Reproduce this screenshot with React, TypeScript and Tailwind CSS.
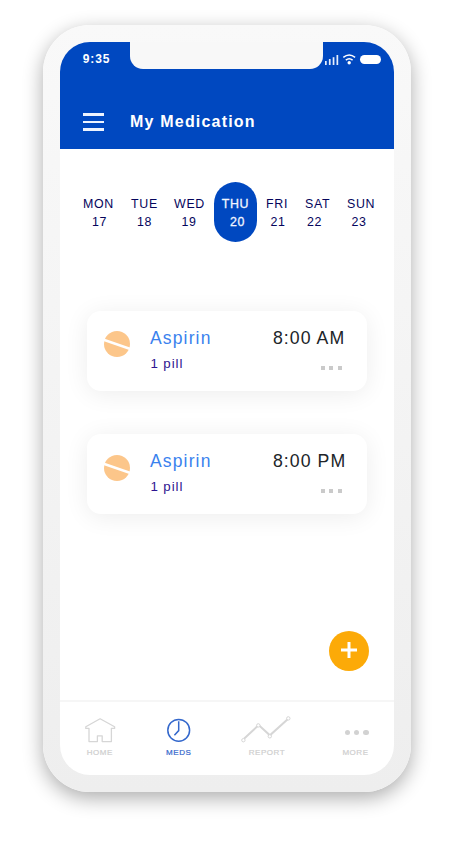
import React from "react";

const days = [
  { name: "MON", date: "17", cell: "w-[48px]", num: "pl-[9px]" },
  { name: "TUE", date: "18", cell: "w-[43px]", num: "pl-[6px]" },
  { name: "WED", date: "19", cell: "w-[40px]", num: "pl-[7.5px]" },
  { name: "THU", date: "20", cell: "w-[43px] pl-[7.7px] bg-[#0048c0] rounded-[21.5px] text-[#f2f6ff] [-webkit-text-stroke:0.3px_currentColor]", num: "pl-[8.3px]", active: true },
  { name: "FRI", date: "21", cell: "w-[39px] ml-[9px]", num: "pl-[4.5px]" },
  { name: "SAT", date: "22", cell: "w-[42px]", num: "pl-[2px]" },
  { name: "SUN", date: "23", cell: "w-[30px]", num: "pl-[4.5px]" },
];

function StatusIcons() {
  return (
    <svg width="60" height="14" viewBox="0 0 60 14" fill="none">
      <g fill="#e6eefc">
        <rect x="2" y="9" width="1.7" height="4" />
        <rect x="5.9" y="7" width="1.7" height="6" />
        <rect x="9.7" y="5.2" width="1.7" height="7.8" />
        <rect x="13.5" y="3" width="1.7" height="10" />
      </g>
      <g stroke="#ffffff" strokeWidth="1.5">
        <path d="M20.3 5.4Q26.2 .6 32.1 5.4" />
        <path d="M22.8 8.2Q26.2 5.5 29.6 8.2" />
      </g>
      <circle cx="26.2" cy="10.7" r="1.7" fill="#fff" />
      <rect x="37" y="3" width="21" height="9" rx="4.5" fill="#fff" />
    </svg>
  );
}

function PillIcon() {
  return (
    <svg width="26" height="26" viewBox="0 0 26 26">
      <circle cx="13" cy="13" r="13" fill="#fcc68a" />
      <path d="M-1 8.6L27 18.2" stroke="#fff" strokeWidth="2.6" />
    </svg>
  );
}

function MedCard({ time, iconPad }: { time: string; iconPad: string }) {
  return (
    <div className="flex h-[80px] w-[280px] rounded-[14px] bg-white pl-[17px] shadow-[0_3px_24px_rgba(0,0,0,0.075)]">
      <div className={"w-[46px] " + iconPad}>
        <PillIcon />
      </div>
      <div className="w-[123px] pt-[17px]">
        <div className="text-[17.5px] leading-[20px] tracking-[1.15px] text-[#3a82ee]">Aspirin</div>
        <div className="mt-[8px] pl-[0.5px] text-[13.3px] leading-[16px] tracking-[0.9px] text-[#2d1590]">1 pill</div>
      </div>
      <div className="w-[80px] pt-[17px]">
        <div className="whitespace-nowrap text-[17.7px] leading-[20px] tracking-[1.05px] text-[#202428]">{time}</div>
        <div className="mt-[18px] flex gap-[4.5px] pl-[48px]">
          <i className="h-[4px] w-[4px] bg-[#cacaca]" />
          <i className="h-[4px] w-[4px] bg-[#cacaca]" />
          <i className="h-[4px] w-[4px] bg-[#cacaca]" />
        </div>
      </div>
    </div>
  );
}

const label = "text-[8px] leading-[10px] tracking-[0.55px] whitespace-nowrap [-webkit-text-stroke:0.2px_currentColor]";

export default function App() {
  return (
    <div className="h-[845px] w-[458px] overflow-hidden bg-white pt-[25px] pl-[43px] font-['Liberation_Sans',Arial,sans-serif]">
      <div className="h-[767px] w-[368px] rounded-[47px] bg-gradient-to-b from-[#f9f9f9] to-[#eeeeee] px-[16.7px] pt-[16.7px] shadow-[0_6px_20px_rgba(0,0,0,0.33)]">
        <div className="flex h-[733.3px] flex-col overflow-hidden rounded-[30px] bg-white">
          <header className="h-[107.3px] shrink-0 bg-[#0048c0]">
            <div className="flex h-[27.3px]">
              <div className="w-[70.3px] pt-[10px] pl-[23px] text-[12px] leading-[14px] font-bold tracking-[0.9px] text-white">9:35</div>
              <div className="w-[193px] rounded-b-[13px] bg-[#f8f8f8]" />
              <div className="flex-1 pt-[10.3px]">
                <StatusIcons />
              </div>
            </div>
            <div className="flex items-center pt-[43px] pl-[23.3px]">
              <div className="flex w-[47px] flex-col gap-[4.7px]">
                <i className="h-[2.6px] w-[21px] bg-[#edf3ff]" />
                <i className="h-[2.6px] w-[21px] bg-[#edf3ff]" />
                <i className="h-[2.6px] w-[21px] bg-[#edf3ff]" />
              </div>
              <h1 className="text-[16px] leading-[20px] font-bold tracking-[1.2px] text-white">My Medication</h1>
            </div>
          </header>

          <div className="mt-[33px] flex shrink-0 pl-[23.3px]">
            {days.map((d) => (
              <div key={d.name} className={"h-[60px] shrink-0 pt-[13px] text-[12.4px] leading-[18px] tracking-[0.7px] " + (d.active ? "" : "text-[#05055c] ") + d.cell}>
                <div>{d.name}</div>
                <div className={d.num}>{d.date}</div>
              </div>
            ))}
          </div>

          <main className="flex flex-1 flex-col gap-[43px] pt-[69px] pl-[27.3px]">
            <MedCard time="8:00 AM" iconPad="pt-[20px]" />
            <MedCard time="8:00 PM" iconPad="pt-[21px]" />
            <button className="mt-[74px] ml-[242px] flex h-[40px] w-[40px] items-center justify-center rounded-full bg-[#fcaa08] pb-[2px]">
              <svg width="16" height="16" viewBox="0 0 16 16">
                <path d="M8 0V16M0 8H16" stroke="#fff" strokeWidth="3" />
              </svg>
            </button>
          </main>

          <nav className="flex h-[75px] shrink-0 border-t-2 border-[#f6f6f6] text-[#cecece]">
            <div className="w-[106px] pt-[16px] pl-[25px]">
              <svg width="32" height="26" viewBox="0 0 32 26" fill="none" stroke="#d6d6d6" strokeWidth="1.3" strokeLinejoin="round">
                <path d="M15.1 .8L.8 8.8V10.4H4V23.6H12.4V17.8H17.2V23.6H26.4V10.4H29.6V8.8Z" />
              </svg>
              <div className={"mt-[4px] pl-[2px] " + label}>HOME</div>
            </div>
            <div className="w-[75px] pt-[15px] text-[#3366cc]">
              <svg className="ml-[1px]" width="25" height="26" viewBox="0 0 25 26" fill="none" stroke="#3468cc" strokeWidth="1.5">
                <circle cx="11.7" cy="13.3" r="10.9" />
                <path d="M11.7 4.2V13.6L7.4 18.2" />
              </svg>
              <div className={"mt-[5px] pl-[0.4px] " + label}>MEDS</div>
            </div>
            <div className="w-[101px] pt-[13px]">
              <svg width="51" height="28" viewBox="0 0 51 28" fill="none" stroke="#d6d6d6">
                <path d="M3 23.8L17.7 10L28.9 20.3L47.5 3.6" strokeWidth="2" />
                <g fill="#fff" strokeWidth="1">
                  <circle cx="2.4" cy="25.2" r="1.7" />
                  <circle cx="17.3" cy="10.4" r="1.7" />
                  <circle cx="28.8" cy="21.3" r="1.7" />
                  <circle cx="47.3" cy="3.4" r="1.7" />
                </g>
              </svg>
              <div className={"mt-[5px] pl-[8px] " + label}>REPORT</div>
            </div>
            <div>
              <div className="flex h-[46px] items-end gap-[4px] pl-[3px]">
                <div className="flex gap-[4.2px] pb-[13px]">
                  <i className="h-[5.2px] w-[5.2px] rounded-full bg-[#d2d2d2]" />
                  <i className="h-[5.2px] w-[5.2px] rounded-full bg-[#d2d2d2]" />
                  <i className="h-[5.2px] w-[5.2px] rounded-full bg-[#d2d2d2]" />
                </div>
              </div>
              <div className={"pl-[0.7px] " + label}>MORE</div>
            </div>
          </nav>
        </div>
      </div>
    </div>
  );
}
